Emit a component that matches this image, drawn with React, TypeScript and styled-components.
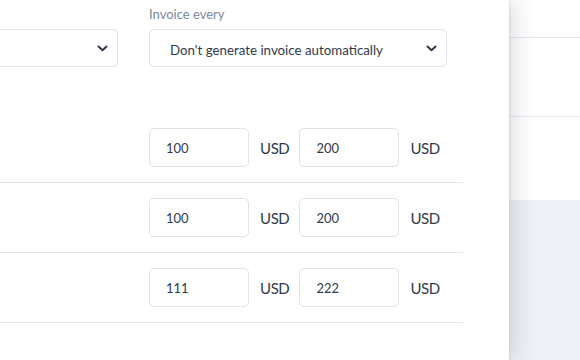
import React from "react";
import styled, { createGlobalStyle } from "styled-components";

const Global = createGlobalStyle`
  html, body { margin: 0; padding: 0; background: #ffffff; }
  body { width: 580px; height: 360px; overflow: hidden; font-family: Lato, "Noto Sans", sans-serif; color: #2f3a4c; }
  * { box-sizing: border-box; }
`;

const Page = styled.div`
  display: grid;
  grid-template-columns: 509px 1fr;
  width: 580px;
  height: 360px;
  overflow: hidden;
`;

const Backdrop = styled.div`
  display: grid;
  grid-template-rows: 38px 79px 83px 1fr;
  background: #ffffff;
`;

const BackCell = styled.div<{ $grey?: boolean; $line?: boolean }>`
  background: ${(p) => (p.$grey ? "#edf1f5" : "#ffffff")};
  border-bottom: ${(p) => (p.$line ? "1px solid #e6e6ef" : "none")};
`;

const Panel = styled.div`
  position: relative;
  z-index: 1;
  background: #ffffff;
  box-shadow: 4px 0 22px rgba(20, 30, 50, 0.16), 1px 0 2px rgba(20, 30, 50, 0.08);
  padding: 5px 46px 0 0;
  overflow: hidden;
`;

const TopGrid = styled.div`
  display: grid;
  grid-template-columns: 118px 298px;
  column-gap: 31px;
  align-items: end;
`;

const Field = styled.div`
  display: flex;
  flex-direction: column;
  gap: 6px;
`;

const Label = styled.div`
  font-size: 13px;
  color: #7a889c;
  line-height: 18px;
`;

const SelectBox = styled.div<{ $cut?: boolean }>`
  height: 38px;
  border: 1px solid #e0e1ea;
  border-left: ${(p) => (p.$cut ? "none" : "1px solid #e0e1ea")};
  border-radius: ${(p) => (p.$cut ? "0 5px 5px 0" : "5px")};
  display: flex;
  align-items: center;
  justify-content: space-between;
  padding: 0 9px 0 20px;
  font-size: 13.3px;
  color: #2f3a4c;
  background: #fff;
`;

const SelectText = styled.span`
  padding-top: 3px;
`;

const Rows = styled.div`
  margin-top: 46px;
`;

const Row = styled.div`
  height: 70px;
  display: grid;
  grid-template-columns: 118px 1fr;
  column-gap: 31px;
  align-items: center;
  border-bottom: 1px solid #e4e4ee;
`;

const Amounts = styled.div`
  display: flex;
  align-items: center;
`;

const Input = styled.div`
  width: 100px;
  height: 39px;
  border: 1px solid #e0e1ea;
  border-radius: 5px;
  display: flex;
  align-items: center;
  padding-left: 16px;
  font-size: 13px;
  color: #2f3a4c;
`;

const Unit = styled.span`
  font-size: 15px;
  letter-spacing: -0.4px;
  color: #2f3a4c;
  padding: 0 10px 0 11px;
`;

const Chevron = () => (
  <svg width="11" height="7" viewBox="0 0 11 7">
    <path d="M1.5 1.5 L5.5 5.2 L9.5 1.5" fill="none" stroke="#2f3a4c" strokeWidth="2" strokeLinecap="round" strokeLinejoin="round" />
  </svg>
);

const rows = [
  ["100", "200"],
  ["100", "200"],
  ["111", "222"],
];

export default function App() {
  return (
    <>
      <Global />
      <Page>
        <Panel>
          <TopGrid>
            <SelectBox $cut>
              <span />
              <Chevron />
            </SelectBox>
            <Field>
              <Label>Invoice every</Label>
              <SelectBox>
                <SelectText>Don't generate invoice automatically</SelectText>
                <Chevron />
              </SelectBox>
            </Field>
          </TopGrid>
          <Rows>
            {rows.map((r, i) => (
              <Row key={i}>
                <span />
                <Amounts>
                  <Input>{r[0]}</Input>
                  <Unit>USD</Unit>
                  <Input>{r[1]}</Input>
                  <Unit>USD</Unit>
                </Amounts>
              </Row>
            ))}
          </Rows>
        </Panel>
        <Backdrop>
          <BackCell $line />
          <BackCell $line />
          <BackCell />
          <BackCell $grey />
        </Backdrop>
      </Page>
    </>
  );
}
